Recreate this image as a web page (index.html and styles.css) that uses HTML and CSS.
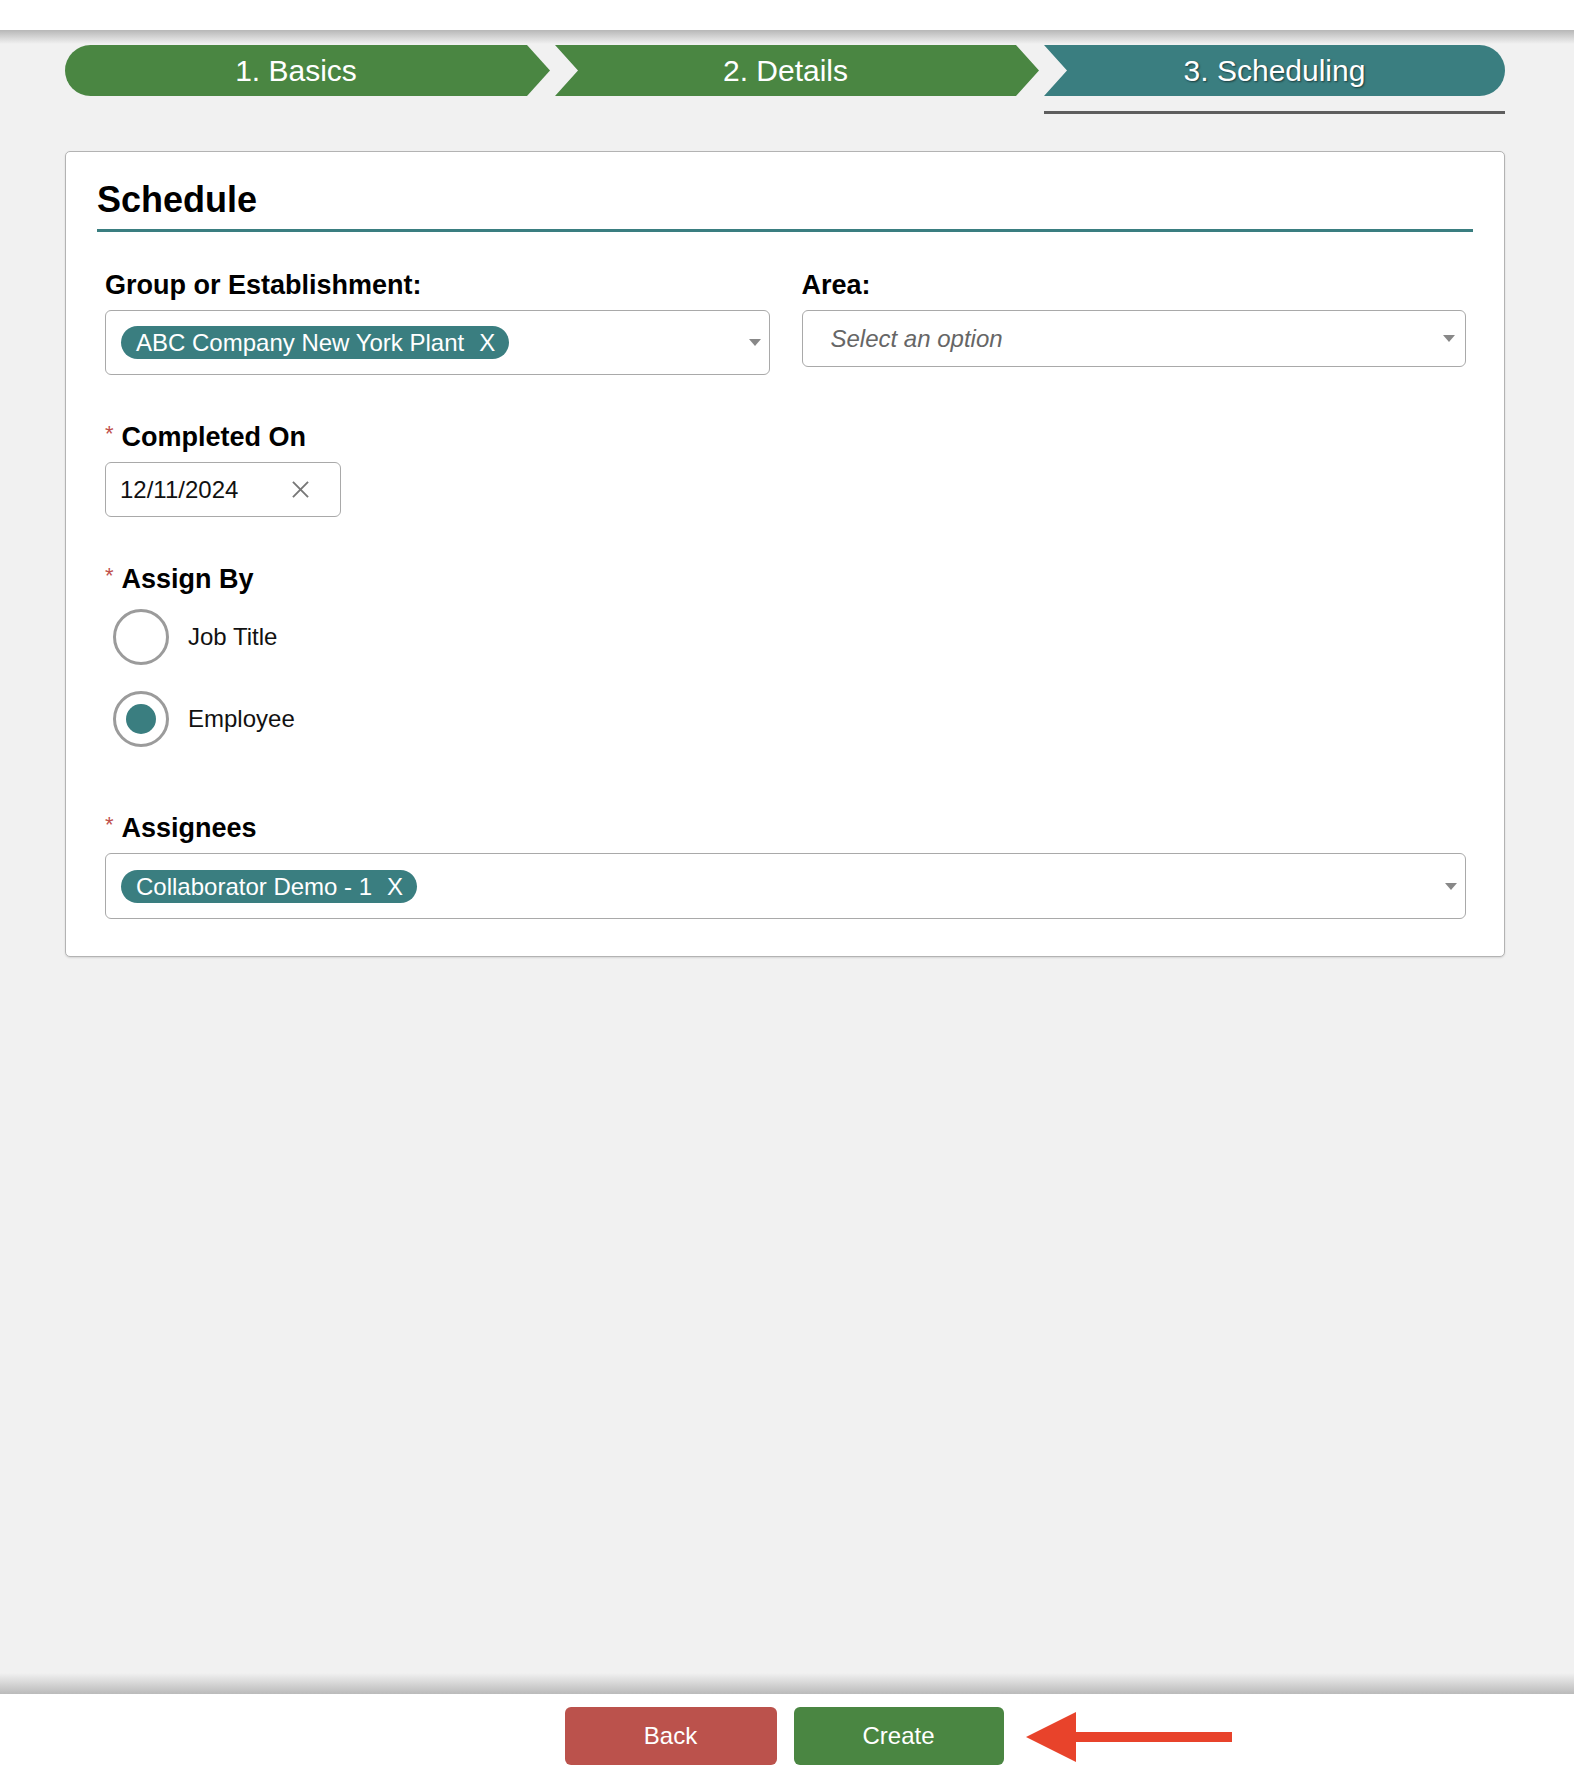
FILE: index.html
```html
<!DOCTYPE html>
<html lang="en">
<head>
    <meta charset="UTF-8">
    <meta name="viewport" content="width=device-width, initial-scale=1.0">
    <title>New Task - Scheduling</title>
    <link rel="stylesheet" href="styles.css">
</head>
<body>
    <div class="topbar"></div>

    <main class="page">
        <!-- wizard progress -->
        <div class="steps">
            <div class="step-col">
                <div class="step step-first">1. Basics</div>
            </div>
            <div class="step-col">
                <div class="step step-mid">2. Details</div>
            </div>
            <div class="step-col">
                <div class="step step-last current">3. Scheduling</div>
                <div class="step-underline"></div>
            </div>
        </div>

        <div class="card">
            <h2>Schedule</h2>

            <form class="form">
                <div class="row">
                    <div>
                        <label class="field-label">Group or Establishment:</label>
                        <div class="select">
                            <span class="chip">ABC Company New York Plant<span class="chip-x">X</span></span>
                            <span class="caret"></span>
                        </div>
                    </div>
                    <div>
                        <label class="field-label">Area:</label>
                        <div class="select single">
                            <span class="placeholder">Select an option</span>
                            <span class="caret"></span>
                        </div>
                    </div>
                </div>

                <div class="field">
                    <label class="field-label"><span class="req">*</span>Completed On</label>
                    <div class="date-input">
                        <span>12/11/2024</span>
                        <svg class="clear" width="18" height="18" viewBox="0 0 18 18">
                            <path d="M1 1L17 17M17 1L1 17" stroke="#777" stroke-width="2" fill="none"/>
                        </svg>
                    </div>
                </div>

                <div class="field">
                    <label class="field-label"><span class="req">*</span>Assign By</label>
                    <div class="radios">
                        <div class="radio-option">
                            <span class="radio"></span>
                            <span>Job Title</span>
                        </div>
                        <div class="radio-option">
                            <span class="radio checked"></span>
                            <span>Employee</span>
                        </div>
                    </div>
                </div>

                <div class="field">
                    <label class="field-label"><span class="req">*</span>Assignees</label>
                    <div class="select tall">
                        <span class="chip">Collaborator Demo - 1<span class="chip-x">X</span></span>
                        <span class="caret"></span>
                    </div>
                </div>
            </form>
        </div>
    </main>

    <div class="footer">
        <button class="btn btn-back">Back</button>
        <div class="create-wrap">
            <button class="btn btn-create">Create</button>
            <svg class="pointer" width="206" height="50" viewBox="0 0 206 50">
                <polygon points="0,25 50,0 50,20 206,20 206,30 50,30 50,50" fill="#e8432b"/>
            </svg>
        </div>
    </div>
</body>
</html>
```

FILE: styles.css
```css
* {
    box-sizing: border-box;
}

body {
    margin: 0;
    min-height: 100vh;
    display: flex;
    flex-direction: column;
    font-family: "Liberation Sans", Arial, Helvetica, sans-serif;
    color: #000;
    background: #f1f1f1;
}

.topbar {
    height: 30px;
    background: #fff;
}

.page {
    flex: 1;
    padding: 15px 69px 0 65px;
    background: linear-gradient(to bottom, #b7b7b7 0, #f1f1f1 14px, #f1f1f1 calc(100% - 21px), #bababa 100%);
}

/* steps */
.steps {
    display: grid;
    grid-template-columns: 485px 484px 1fr;
    column-gap: 5px;
    align-items: start;
}

.step {
    height: 51px;
    display: flex;
    align-items: center;
    justify-content: center;
    color: #fff;
    font-size: 30px;
    background: #4a8642;
}

.step-first {
    border-radius: 26px 0 0 26px;
    padding-right: 23px;
    clip-path: polygon(0 0, calc(100% - 23px) 0, 100% 50%, calc(100% - 23px) 100%, 0 100%);
}

.step-mid {
    padding-right: 23px;
    clip-path: polygon(0 0, calc(100% - 23px) 0, 100% 50%, calc(100% - 23px) 100%, 0 100%, 23px 50%);
}

.step-last {
    border-radius: 0 26px 26px 0;
    clip-path: polygon(0 0, 100% 0, 100% 100%, 0 100%, 23px 50%);
}

.step.current {
    background: #3a7e80;
    text-shadow: 1px 1px 2px rgba(0, 0, 0, 0.55);
}

.step-underline {
    height: 3px;
    margin-top: 15px;
    background: #5e5e5e;
}

/* card */
.card {
    margin-top: 37px;
    padding: 27px 31px 37px;
    background: #fff;
    border: 1px solid #b3b3b3;
    border-radius: 5px;
    box-shadow: 0 1px 2px rgba(0, 0, 0, 0.12);
}

.card h2 {
    margin: 0;
    font-size: 36px;
    line-height: 41px;
    padding-bottom: 9px;
    border-bottom: 3px solid #3a7e80;
}

.form {
    padding: 38px 7px 0 8px;
}

.row {
    display: grid;
    grid-template-columns: 1fr 1fr;
    column-gap: 32px;
    align-items: start;
}

.field {
    margin-top: 47px;
}

.field-label {
    display: block;
    font-size: 27px;
    font-weight: bold;
    line-height: 31px;
    margin-bottom: 9px;
}

.req {
    color: #c0504d;
    font-weight: normal;
    font-size: 22px;
    vertical-align: top;
    line-height: 24px;
    margin-right: 8px;
}

/* select boxes */
.select {
    height: 65px;
    display: flex;
    align-items: center;
    padding: 0 8px 0 15px;
    border: 1px solid #a9a9a9;
    border-radius: 6px;
    background: #fff;
}

.select.single {
    height: 57px;
    padding: 0 10px 0 28px;
}

.select.tall {
    height: 66px;
}

.caret {
    margin-left: auto;
    border-top: 7px solid #888;
    border-left: 6px solid transparent;
    border-right: 6px solid transparent;
}

.chip {
    display: inline-flex;
    height: 33px;
    line-height: 33px;
    padding: 0 14px 0 15px;
    border-radius: 17px;
    background: #3a7e80;
    color: #fff;
    font-size: 24px;
}

.chip-x {
    margin-left: 15px;
}

.placeholder {
    font-size: 24px;
    font-style: italic;
    color: #666;
}

/* date */
.date-input {
    width: 236px;
    height: 55px;
    display: flex;
    align-items: center;
    justify-content: space-between;
    padding: 0 31px 0 14px;
    border: 1px solid #a9a9a9;
    border-radius: 6px;
    font-size: 24px;
    color: #111;
}

.clear {
    width: 17px;
    height: 17px;
}

/* radios */
.radios {
    display: flex;
    flex-direction: column;
    gap: 26px;
    margin-top: 14px;
    padding: 0 0 19px 8px;
}

.radio-option {
    display: flex;
    align-items: center;
    gap: 19px;
    font-size: 24px;
    color: #111;
}

.radio {
    width: 56px;
    height: 56px;
    display: grid;
    place-items: center;
    border: 3px solid #9b9b9b;
    border-radius: 50%;
}

.radio.checked::after {
    content: "";
    width: 30px;
    height: 30px;
    border-radius: 50%;
    background: #3a7e80;
}

/* footer */
.footer {
    height: 84px;
    display: flex;
    justify-content: center;
    align-items: flex-start;
    gap: 17px;
    padding: 13px 6px 0 0;
    background: #fff;
}

.btn {
    height: 58px;
    border: none;
    border-radius: 6px;
    color: #fff;
    font-family: inherit;
    font-size: 24px;
    cursor: pointer;
}

.btn-back {
    width: 212px;
    background: #bb524c;
}

.btn-create {
    width: 210px;
    background: #4a8642;
}

.create-wrap {
    position: relative;
}

.pointer {
    position: absolute;
    left: calc(100% + 22px);
    top: 5px;
}
```
